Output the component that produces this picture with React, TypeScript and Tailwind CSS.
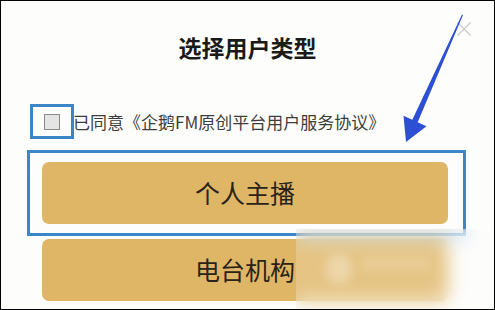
import React from "react";

export default function App() {
  return (
    <div
      className="relative w-[495px] h-[310px] overflow-hidden border border-black bg-[#fdfdfb] flex flex-col"
      style={{ fontFamily: '"Noto Sans CJK SC", "Noto Sans", sans-serif' }}
    >
      <div className="absolute right-[19px] top-[15px] text-[22px] leading-none text-[#c8c8c8] font-light">×</div>

      <div className="pt-[31px] text-center text-[23px] leading-[30px] font-bold text-[#1a1a1a]">选择用户类型</div>

      <div className="mt-[42px] ml-[29px] flex items-center">
        <div className="w-[44px] h-[35px] border-[3px] border-[#3a86c6] flex items-center justify-center">
          <div className="w-[16px] h-[16px] border border-[#8a8a8a] bg-[#e4e4e4]"></div>
        </div>
        <span className="text-[17px] leading-[22px] text-[#3d3d3d] -ml-[1px]">已同意《企鹅FM原创平台用户服务协议》</span>
      </div>

      <div className="mt-[11px] ml-[26px] w-[439px] border-[3px] border-[#3a86c6] pl-[12px] pr-[15px] py-[9px]">
        <div className="h-[62px] rounded-[7px] bg-[#dfb666] flex items-center justify-center text-[25px] text-[#2a2319]">个人主播</div>
      </div>

      <div className="mt-[3px] ml-[41px] w-[406px] h-[62px] rounded-[7px] bg-[#dfb666] flex items-center justify-center text-[25px] text-[#2a2319]">电台机构</div>

      <div className="absolute left-[295px] top-[228px] w-[200px] h-[82px] backdrop-blur-[9px] bg-white/20">
        <div className="absolute left-[30px] top-[25px] w-[26px] h-[30px] rounded-full bg-white/30 blur-[5px]"></div>
        <div className="absolute left-[65px] top-[28px] w-[70px] h-[14px] rounded bg-white/15 blur-[5px]"></div>
      </div>

      <svg className="absolute left-0 top-0" width="495" height="310" viewBox="0 0 495 310">
        <polygon
          points="462,14 416.7,121.2 425.5,125.2 405,141 402.5,114.8 411.3,118.8 461,13.5"
          fill="#2d4fd4"
        />
      </svg>
    </div>
  );
}
